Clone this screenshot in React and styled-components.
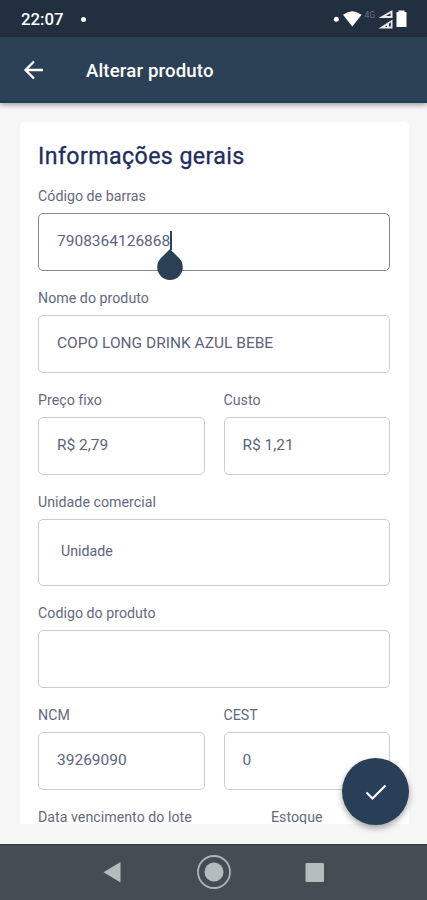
import React from 'react'
import styled, { createGlobalStyle } from 'styled-components';

const GlobalStyle = createGlobalStyle`
    * {
        box-sizing: border-box;
    }

    body {
        margin: 0;
        font-family: Roboto, sans-serif;
    }
`;

const Screen = styled.div`
    display: flex;
    flex-direction: column;
    position: relative;
    width: 427px;
    height: 900px;
    overflow: hidden;
    background: #f6f6f6;
`;

const StatusBar = styled.div`
    display: flex;
    flex: none;
    align-items: center;
    justify-content: space-between;
    height: 37px;
    padding: 0 20px 0 21px;
    background: #212f3f;
    color: #fff;
`;

const Clock = styled.div`
    display: flex;
    align-items: center;
    gap: 17px;
    height: 37px;
    padding-top: 1px;
    font-size: 16.8px;
    font-weight: 500;
`;

const Dot = styled.span`
    width: 5px;
    height: 5px;
    border-radius: 50%;
    background: #fff;
`;

const AppBar = styled.header`
    display: flex;
    flex: none;
    align-items: center;
    gap: 40px;
    height: 66px;
    padding: 2px 0 0 22px;
    background: #2c4156;
    border-bottom: 2px solid #1d3d57;
    box-shadow: 0 2px 5px rgba(0, 0, 0, 0.35);
    z-index: 1;
`;

const AppTitle = styled.h1`
    margin: 2px 0 0;
    color: #fff;
    font-size: 18.6px;
    font-weight: 500;
    line-height: 24px;
    letter-spacing: 0.15px;
`;

const Content = styled.main`
    flex: 1;
    min-height: 0;
    padding: 19px 18px 20px 20px;
`;

const Card = styled.section`
    height: 702px;
    padding: 19px 19px 0 18px;
    overflow: hidden;
    border-radius: 5px 5px 0 0;
    background: #fff;
`;

const SectionTitle = styled.h2`
    margin: 0 0 15px;
    color: #222c5c;
    font-size: 23.2px;
    font-weight: 400;
    line-height: 31px;
    letter-spacing: 0.4px;
    -webkit-text-stroke: 0.3px #222c5c;
`;

const Row = styled.div`
    display: grid;
    grid-template-columns: ${(props) => props.$columns || '1fr'};
    column-gap: 19px;
    margin-bottom: 18px;
`;

const Label = styled.label`
    display: block;
    height: 18px;
    margin-bottom: 8px;
    color: #636a80;
    font-size: 14.2px;
    line-height: 18px;
    letter-spacing: 0.03px;
    white-space: nowrap;
`;

const Input = styled.div`
    display: flex;
    align-items: center;
    height: ${(props) => (props.$tall ? 67 : 58)}px;
    padding: 0 ${(props) => (props.$tall ? 22 : 18)}px 3px;
    border: 1px solid ${(props) => (props.$focused ? '#85888b' : '#cccccc')};
    border-radius: 5px;
    color: #5c647c;
    font-size: ${(props) => (props.$tall ? 14.2 : 15.5)}px;
    white-space: nowrap;
`;

const Caret = styled.span`
    position: relative;
    width: 2px;
    height: 19px;
    background: #2c4156;
`;

const Handle = styled.svg`
    position: absolute;
    top: 17px;
    left: -14px;
`;

const Fab = styled.button`
    position: absolute;
    top: 758px;
    left: 342px;
    display: flex;
    align-items: center;
    justify-content: center;
    width: 67px;
    height: 67px;
    padding: 0;
    border: 0;
    border-radius: 50%;
    background: #283f57;
    box-shadow: 0 3px 6px rgba(0, 0, 0, 0.35);
`;

const NavBar = styled.nav`
    display: flex;
    flex: none;
    align-items: center;
    justify-content: center;
    height: 56px;
    background: #454d53;
    border-top: 1px solid #2e3d42;
`;

const Field = ({ label, value, focused, tall }) => (
    <div>
        <Label>{label}</Label>
        <Input $focused={focused} $tall={tall}>
            {value}
            {focused && (
                <Caret>
                    <Handle width="28" height="32" viewBox="0 0 28 32">
                        <path d="M14 1L23 10A12.8 12.8 0 1 1 5 10Z" fill="#2b4055" />
                    </Handle>
                </Caret>
            )}
        </Input>
    </div>
)

const StatusIcons = () => (
    <svg width="75" height="22" viewBox="332 8 75 22">
        <circle cx="336.3" cy="19.3" r="2.5" fill="#fff" />
        <path d="M343 14.8Q352.3 7.6 361.6 14.8L352.3 26.5Z" fill="#fff" />
        <text x="364.5" y="17.5" fontSize="8.5" fill="#65717f">4G</text>
        <path d="M378.5 18L392.5 10V18Z" fill="#e8e8e8" />
        <path d="M386 16L390.5 13.2V16Z" fill="#212f3f" />
        <path d="M378.5 28.5L392.5 19.5V28.5Z" fill="#e8e8e8" />
        <path d="M385 27L387 25.5V27ZM389 26.5V23.5L390.8 22.3V26.5Z" fill="#212f3f" />
        <path d="M398.5 12V10.5H404.5V12H406.5V27H396.5V12Z" fill="#fff" />
    </svg>
)

const App = () => {
  return (
    <Screen>
        <GlobalStyle />
        <StatusBar>
            <Clock>22:07<Dot /></Clock>
            <StatusIcons />
        </StatusBar>
        <AppBar>
            <svg width="24" height="24" viewBox="0 0 24 24">
                <path d="M21 12H3.5M12 3.5L3.5 12L12 20.5" fill="none" stroke="#fff" strokeWidth="2.3" />
            </svg>
            <AppTitle>Alterar produto</AppTitle>
        </AppBar>
        <Content>
            <Card>
                <SectionTitle>Informações gerais</SectionTitle>
                <Row>
                    <Field label="Código de barras" value="7908364126868" focused />
                </Row>
                <Row>
                    <Field label="Nome do produto" value="COPO LONG DRINK AZUL BEBE" />
                </Row>
                <Row $columns="1fr 1fr">
                    <Field label="Preço fixo" value="R$ 2,79" />
                    <Field label="Custo" value="R$ 1,21" />
                </Row>
                <Row>
                    <Field label="Unidade comercial" value="Unidade" tall />
                </Row>
                <Row>
                    <Field label="Codigo do produto" value="" />
                </Row>
                <Row $columns="1fr 1fr">
                    <Field label="NCM" value="39269090" />
                    <Field label="CEST" value="0" />
                </Row>
                <Row $columns="214px 1fr">
                    <Field label="Data vencimento do lote" value="" />
                    <Field label="Estoque" value="" />
                </Row>
            </Card>
        </Content>
        <Fab aria-label="Salvar">
            <svg width="24" height="20" viewBox="0 0 24 20">
                <path d="M2.5 10.5L8.5 16.5L21.5 3.5" fill="none" stroke="#fff" strokeWidth="2.2" />
            </svg>
        </Fab>
        <NavBar>
            <svg width="427" height="55" viewBox="0 845 427 55">
                <path d="M103.5 872.3L120.5 862V882.5Z" fill="#b4bdbe" />
                <circle cx="214" cy="872" r="16" fill="none" stroke="#aeb7b8" strokeWidth="1.8" />
                <circle cx="214" cy="872" r="9.5" fill="#b4bdbe" />
                <rect x="305.5" y="863" width="18.5" height="19" rx="1" fill="#b4bdbe" />
            </svg>
        </NavBar>
    </Screen>
  )
}

export default App
